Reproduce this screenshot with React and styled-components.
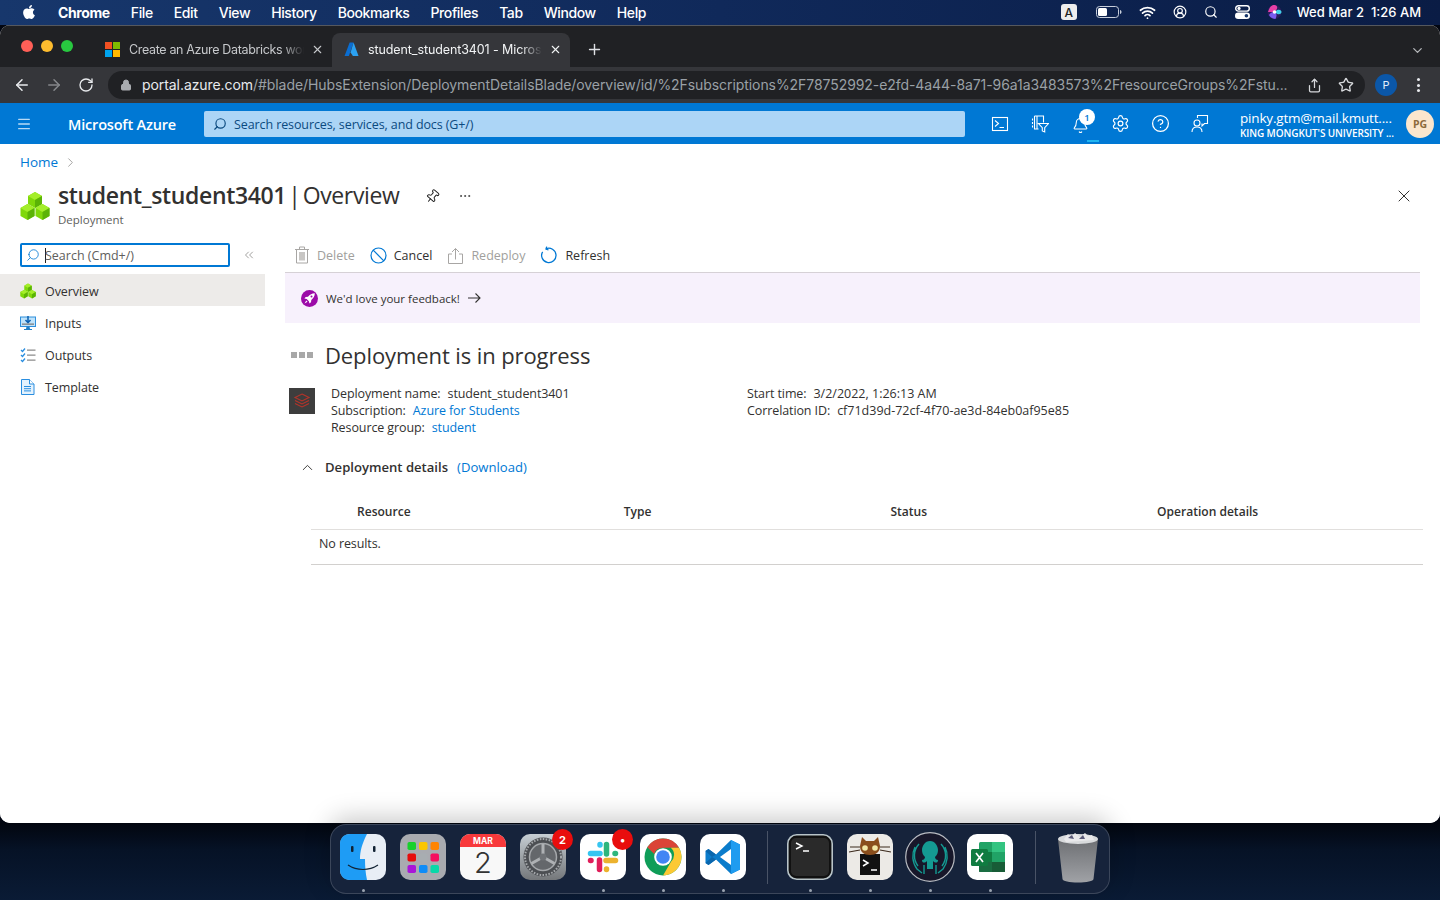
import React from 'react';
import styled, { createGlobalStyle } from 'styled-components';
import { FaApple } from 'react-icons/fa';
import { ArrowLeft, ArrowRight, RotateCw, Lock, Share, Star, ChevronDown, X, Plus, Search, Pin, ChevronRight, ChevronUp, ChevronsLeft, Wifi, CircleUserRound, Ellipsis, Menu, Settings, CircleHelp, Bell } from 'lucide-react';

const Global = createGlobalStyle`
  html, body { margin: 0; padding: 0; background: #0b1830; }
  * { box-sizing: border-box; }
  #root { width: 1440px; height: 900px; overflow: hidden; }
`;
const AZ = '"Open Sans", "Noto Sans", sans-serif';
const MAC = 'Inter, "Liberation Sans", sans-serif';
const BLUE = '#0078d4';

const Desktop = styled.div`
  width: 1440px; height: 900px; display: flex; flex-direction: column; overflow: hidden;
  background: #020611;
`;
const MenuBar = styled.header`
  height: 25px; flex: none; display: flex; align-items: center; padding: 0 19px 1px 21px;
  background: linear-gradient(90deg, #17376c 0%, #10295a 50%, #0a1c45 100%);
  color: #fff; font: 500 14px ${MAC};
`;
const MenuLeft = styled.div`display: flex; align-items: center; gap: 21px;`;
const MenuItem = styled.span`font-weight: ${p => (p.$bold ? 700 : 500)}; letter-spacing: -0.39px;`;
const MenuRight = styled.div`margin-left: auto; display: flex; align-items: center; gap: 17px;`;
const InputBadge = styled.span`
  width: 16px; height: 16px; margin-right: 2px; background: #eee; color: #222; border-radius: 3px; font: 500 12px ${MAC};
  display: flex; align-items: center; justify-content: center;
`;
const Clock = styled.span`margin-left: -2px; font-size: 13px; white-space: pre;`;

const Window = styled.div`
  height: 798px; flex: none; background: #fff; border-radius: 10px; overflow: hidden;
  display: flex; flex-direction: column; box-shadow: inset 0 0 0 1px rgba(255,255,255,.08);
  position: relative; z-index: 1;
`;
const TabStrip = styled.div`
  height: 42px; flex: none; background: #202124; display: flex; align-items: flex-end; padding-left: 21px; position: relative;
  border-top: 1px solid #55585e;
`;
const Lights = styled.div`display: flex; gap: 8px; align-self: flex-start; margin-top: 14px; margin-right: 20px;`;
const Light = styled.i`width: 12px; height: 12px; border-radius: 50%; background: ${p => p.$c};`;
const Tab = styled.div`
  width: ${p => p.$w}px; height: 34px; display: flex; align-items: center; flex: none;
  background: ${p => (p.$active ? '#35363a' : 'transparent')}; border-radius: 8px 8px 0 0;
  color: ${p => (p.$active ? '#f1f3f4' : '#c6c8cb')}; font: 400 12.5px ${MAC}; padding: 0 8px 2px 12px;
  letter-spacing: ${p => (p.$active ? '-0.1px' : '-0.35px')};
  svg { flex: none; }
`;
const TabTitle = styled.span`
  flex: 1; margin: 0 7px 0 9px; white-space: nowrap; overflow: hidden;
  -webkit-mask-image: linear-gradient(90deg, #000 88%, transparent);
  mask-image: linear-gradient(90deg, #000 88%, transparent);
`;
const NewTab = styled.div`margin: 0 0 9px 16px; color: #dfe1e5; display: flex;`;
const TabsMenu = styled.div`position: absolute; right: 15px; top: 17px; color: #b6b8bb; display: flex;`;

const Toolbar = styled.div`
  height: 36px; flex: none; background: #35363a; display: flex; align-items: center; padding: 0 12px 0 6px; color: #e6e7e9;
`;
const NavBtn = styled.div`width: 32px; flex: none; display: flex; justify-content: center; color: ${p => (p.$dim ? '#85878b' : '#e8eaed')};`;
const Omnibox = styled.div`
  flex: none; width: 1257px; height: 28px; margin-left: 6px; border-radius: 14px; background: #202124;
  display: flex; align-items: center; padding: 0 11px 0 12px; font: 400 14px ${MAC}; color: #9aa0a6;
`;
const Url = styled.span`flex: 1; margin: -1px 0 0 10px; white-space: nowrap; letter-spacing: -0.072px; b { font-weight: 400; color: #e8eaed; }`;
const OmniIcon = styled.span`margin-left: ${p => p.$ml || 0}px; display: flex; color: #d6d8db;`;
const Profile = styled.div`
  width: 22px; height: 22px; flex: none; border-radius: 50%; background: #0b57a8; color: #e3eefb; margin-left: 10px;
  display: flex; align-items: center; justify-content: center; font: 400 11px ${MAC};
`;
const Kebab = styled.div`margin-left: 20px; display: flex; flex-direction: column; gap: 2.5px; i { width: 3px; height: 3px; background: #e8eaed; border-radius: 50%; }`;

const AzureBar = styled.div`
  height: 41px; flex: none; background: ${BLUE}; color: #fff; display: flex; align-items: center; padding-left: 16px; font-family: ${AZ};
`;
const Brand = styled.span`margin-left: 36px; padding-top: 1px; width: 136px; font-size: 14.5px; font-weight: 600; letter-spacing: -0.18px; white-space: nowrap;`;
const GlobalSearch = styled.div`
  width: 761px; height: 26px; background: #acd5f6; border-radius: 2px; display: flex; align-items: center; gap: 7px; padding: 1px 9px 0;
  color: #0b4a7f; font-size: 12.5px; letter-spacing: -0.1px; svg { transform: scaleX(-1); }
`;
const HeaderIcons = styled.div`display: flex; margin-left: 15px;`;
const HeaderIcon = styled.div`
  width: 40px; height: 41px; display: flex; align-items: center; justify-content: center; position: relative;
`;
const BellWrap = styled.span`display: flex; margin: 3px 0 0 0;`;
const Count = styled.span`
  position: absolute; top: 6px; right: 5px; width: 16px; height: 16px; border-radius: 50%; background: #fff; color: ${BLUE};
  font-size: 9.5px; font-weight: 600; display: flex; align-items: center; justify-content: center;
`;
const ActiveMark = styled.span`position: absolute; left: 27px; bottom: 2px; width: 12px; height: 2px; background: #20b5f0;`;
const Account = styled.div`
  margin-left: 20px; width: 154px; display: flex; flex-direction: column; white-space: nowrap; padding-top: 2px;
`;
const AccountMail = styled.span`font-size: 13.5px; letter-spacing: -0.18px; line-height: 17px;`;
const AccountOrg = styled.span`font-size: 10px; font-weight: 600; letter-spacing: -0.1px; line-height: 13px;`;
const Avatar = styled.div`
  margin-left: 12px; width: 28px; height: 28px; border-radius: 50%; background: #fbe6cd; color: #8d6a3c;
  display: flex; align-items: center; justify-content: center; font-size: 10.5px; font-weight: 700;
`;

const Portal = styled.main`flex: 1; display: flex; flex-direction: column; font-family: ${AZ}; color: #323130; min-height: 0; background: #fff;`;
const Breadcrumb = styled.nav`
  height: 36px; flex: none; padding: 0 0 0 20px; display: flex; align-items: center; gap: 5px; color: ${BLUE}; font-size: 13.5px;
  svg { color: #8a8886; margin-top: 1px; }
`;
const TitleRow = styled.div`height: 58px; flex: none; display: flex; padding: 0 26px 0 20px;`;
const ResourceIcon = styled.div`width: 38px; flex: none; padding-top: 11px;`;
const TitleBlock = styled.div`display: flex; flex-direction: column; width: 349px; flex: none;`;
const Title = styled.h1`
  margin: 0; font-size: 23px; font-weight: 400; line-height: 30px; white-space: nowrap; letter-spacing: -0.35px; word-spacing: -3.5px;
  b { font-weight: 600; }
`;
const Sub = styled.span`font-size: 11.5px; color: #605e5c; line-height: 18px; margin-top: 1px;`;
const TitleActions = styled.div`display: flex; align-items: center; gap: 18px; height: 30px; padding-top: 2px; margin-left: 18px; color: #222;`;
const Close = styled.div`margin-left: auto; height: 30px; padding-top: 1px; display: flex; align-items: center; color: #323130;`;

const Body = styled.div`flex: 1; display: flex; min-height: 0;`;
const Side = styled.aside`width: 265px; flex: none;`;
const SideSearchRow = styled.div`display: flex; align-items: center; height: 24px; margin: 5px 0 7px 20px;`;
const SideSearch = styled.div`
  width: 210px; height: 24px; border: 2px solid ${BLUE}; border-radius: 2px; display: flex; align-items: center; padding: 0 0 0 4px; gap: 5px;
  font-size: 12.5px; color: #605e5c; svg { color: ${BLUE}; flex: none; transform: scaleX(-1); }
`;
const Caret = styled.span`display: inline-block; width: 1px; height: 15px; background: #222; margin-right: -1px; vertical-align: -3px;`;
const Collapse = styled.div`margin-left: 12px; color: #7a7876; display: flex;`;
const SideItem = styled.div`
  height: 32px; display: flex; align-items: center; padding: 2px 0 0 20px; gap: 9px; font-size: 12.5px; letter-spacing: -0.08px; color: #323130;
  background: ${p => (p.$active ? '#edebe9' : 'transparent')};
`;
const Content = styled.section`flex: 1; min-width: 0; padding: 0 20px 0 20px;`;
const Commands = styled.div`height: 35px; display: flex; align-items: center; border-bottom: 1px solid #d6d1d6; padding: 0 0 0 9px; gap: 15px;`;
const Command = styled.div`
  display: flex; align-items: center; gap: 7px; font-size: 12.5px; color: ${p => (p.$off ? '#a19f9d' : '#323130')};
  svg { flex: none; }
`;
const Feedback = styled.div`
  height: 50px; background: #f7f1fc; display: flex; align-items: center; padding-left: 16px; font-size: 11.5px; gap: 7px; color: #323130;
`;
const Rocket = styled.span`width: 17px; height: 17px; border-radius: 50%; background: #9c0ba8; display: flex; align-items: center; justify-content: center; margin-right: 1px;`;
const Status = styled.div`height: 32px; margin-top: 16px; display: flex; align-items: center; padding-left: 6px;`;
const Dots = styled.div`display: flex; gap: 2px; margin-right: 12px; i { width: 6px; height: 6px; background: #a8a8a8; }`;
const StatusTitle = styled.h2`margin: 0; font-size: 22px; font-weight: 400; letter-spacing: -0.1px; white-space: nowrap; color: #323130;`;
const Summary = styled.div`display: flex; margin: 14px 0 0 4px; font-size: 12.5px; line-height: 17px; color: #323130;`;
const Thumb = styled.div`width: 26px; height: 26px; background: #3d3d3d; display: flex; align-items: center; justify-content: center; margin-top: 3px; flex: none;`;
const FactCol = styled.div`width: ${p => p.$w}px; flex: none; margin-left: ${p => p.$ml || 0}px;`;
const Fact = styled.div`white-space: nowrap; color: #323130; letter-spacing: -0.1px;`;
const FactLabel = styled.span`margin-right: 7px;`;
const HexValue = styled.span`letter-spacing: 0;`;
const Lnk = styled.a`color: ${BLUE};`;
const DetailsHead = styled.div`display: flex; align-items: center; margin: 21px 0 0 14px; height: 20px; font-size: 13.1px; gap: 9px; svg { color: #323130; }`;
const DetailsTitle = styled.span`font-weight: 600;`;
const Download = styled.a`color: ${BLUE};`;
const Table = styled.div`margin: 17px -3px 0 26px;`;
const THead = styled.div`
  display: grid; grid-template-columns: repeat(4, 266.7px); height: 36px; align-items: center; padding-left: 46px;
  border-bottom: 1px solid #e1dfdd; font-size: 12.05px; font-weight: 600; color: #323130;
`;
const NoRows = styled.div`height: 35px; display: flex; align-items: center; padding: 0 0 8px 8px; font-size: 12.5px; letter-spacing: -0.1px; border-bottom: 1px solid #d2d0ce;`;

const DockWrap = styled.div`
  flex: 1; display: flex; justify-content: center; padding-top: 1px; position: relative; z-index: 2;
  background: linear-gradient(180deg, #02060f 0%, #061226 35%, #0a1b35 100%);
`;
const Dock = styled.div`
  width: 780px; height: 70px; border-radius: 16px; background: #16233b; border: 1px solid rgba(255,255,255,.16);
  box-shadow: 0 -6px 26px rgba(0,0,0,.22); display: flex; align-items: center; padding: 0 0 4px 9px;
`;
const DockItem = styled.div`
  width: ${p => p.$w ?? 46}px; height: 46px; flex: none; margin-right: ${p => p.$mr ?? 14}px; border-radius: 10px; position: relative;
  background: ${p => p.$bg || 'transparent'}; display: flex; align-items: center; justify-content: center; overflow: visible;
  svg { display: block; flex: none; }
  &::after {
    content: ''; display: ${p => (p.$on ? 'block' : 'none')}; position: absolute; left: calc(50% - 1.5px); bottom: -12px; width: 3px; height: 3px; border-radius: 50%; background: #9aa3b0;
  }
`;
const Separator = styled.i`width: 1px; height: 53px; background: rgba(255,255,255,.22); flex: none; margin: 0 19.5px 0 6.5px;`;
const Badge = styled.span`
  position: absolute; top: -5px; right: -7px; width: 21px; height: 21px; border-radius: 50%; background: #e90d0d; color: #fff;
  font: 700 11px ${MAC}; display: flex; align-items: center; justify-content: center;
`;
const CalMonth = styled.div`position: absolute; top: 0; left: 0; right: 0; height: 13px; background: #f8393b; color: #fff; border-radius: 10px 10px 0 0; font: 700 8.5px ${MAC}; text-align: center; line-height: 14px;`;
const CalDay = styled.div`color: #333; font: 300 29px ${MAC}; margin-top: 11px; line-height: 32px;`;

const Cubes = ({ s = 30 }) => (
  <svg width={s} height={s} viewBox="0 0 30 30">
    {[[15, 1], [7.5, 13], [22.5, 13]].map(([x, y], i) => (
      <g key={i}>
        <path d={`M${x} ${y}l7 4v8l-7 4-7-4v-8z`} fill="#7fd80a" />
        <path d={`M${x} ${y}l7 4-7 4-7-4z`} fill="#a4ee2a" />
        <path d={`M${x} ${y + 8}l7-4v8l-7 4z`} fill="#5bb306" />
      </g>
    ))}
  </svg>
);
const AzureLogo = () => (
  <svg width="15" height="15" viewBox="0 0 16 15"><path d="M6 0h4.2L5.2 14.5H.6z" fill="#0a6dd1" /><path d="M10.2 0l5.3 14.5h-6L7 10.6z" fill="#2ba1f1" /></svg>
);
const MsLogo = () => (
  <svg width="15" height="15" viewBox="0 0 15 15"><rect width="7" height="7" fill="#f25022" /><rect x="8" width="7" height="7" fill="#7fba00" /><rect y="8" width="7" height="7" fill="#00a4ef" /><rect x="8" y="8" width="7" height="7" fill="#ffb900" /></svg>
);
const Battery = () => (
  <svg width="26" height="12" viewBox="0 0 26 12"><rect x=".5" y=".5" width="22" height="11" rx="3" fill="none" stroke="#c7cedb" /><rect x="2" y="2" width="9" height="8" rx="1.5" fill="#fff" /><path d="M24 4v4c1-.3 1.5-1 1.5-2S25 4.3 24 4z" fill="#c7cedb" /></svg>
);
const ControlCenter = () => (
  <svg width="15" height="14" viewBox="0 0 15 14"><rect x=".7" y=".7" width="13.6" height="5.4" rx="2.7" fill="none" stroke="#fff" strokeWidth="1.4" /><circle cx="4" cy="3.4" r="1.6" fill="#fff" /><rect y="7.5" width="15" height="6.5" rx="3.2" fill="#fff" /><circle cx="11.4" cy="10.7" r="1.8" fill="#17376c" /></svg>
);
const Siri = () => (
  <svg width="15" height="16" viewBox="0 0 15 16"><circle cx="7.5" cy="8" r="7" fill="#2b1d5c" /><path d="M1 8c2-6 4-7 6.5-7S12 4 7.5 8z" fill="#e83fa6" /><path d="M7.5 8c4-4 7-2 7 0s-3 4-7 0z" fill="#3fd0e8" /><path d="M2 11c2-3 4-3 5.5-3s3 3 1 7c-3 0-5.5-2-6.5-4z" fill="#7a5cf0" /><circle cx="7.5" cy="8" r="1.8" fill="#fff" /></svg>
);
const Terminal = () => (
  <svg width="18" height="16" viewBox="0 0 18 16" fill="none" stroke="#fff" strokeWidth="1.1"><rect x="1.5" y="1.5" width="15" height="13" /><path d="M4 4.500l3.500 3-3.500 3M8.500 11.500h4.500" /></svg>
);
const DirFilter = () => (
  <svg width="18" height="18" viewBox="0 0 18 18" fill="none" stroke="#fff" strokeWidth="1.1"><path d="M3.500 1h9v6.500M3.500 1v13h4M6 1v13M1.500 3.500v2M1.500 7v2M1.500 10.500v2M7.500 8.500h10l-3.800 4.200V17l-2.400-1v-3.300z" /></svg>
);
const Feedbk = () => (
  <svg width="18" height="19" viewBox="0 0 18 19" fill="none" stroke="#fff" strokeWidth="1.1"><path d="M6.500 4V1.500h10v8h-3l-2.500 2.500v-2.500" /><circle cx="6" cy="9" r="3" /><path d="M1 18c0-3.500 2-5 5-5s5 1.500 5 5" /></svg>
);
const NavInputs = () => (
  <svg width="16" height="16" viewBox="0 0 16 16"><rect x=".5" y="2" width="15" height="9.5" fill="#bfe3fb" stroke="#2f8fdc" /><path d="M8 1v6M5.500 5L8 7.700 10.500 5" fill="none" stroke="#0a5fb0" strokeWidth="1.5" /><rect x="2" y="8.500" width="12" height="1.300" fill="#7f7f7f" /><path d="M6.500 11.500h3l.5 2.500h2v1H4v-1h2z" fill="#1f7fc7" /></svg>
);
const NavOutputs = () => (
  <svg width="16" height="16" viewBox="0 0 16 16" fill="none"><path d="M1 3l1.500 1.500L5 1.500M1 8l1.500 1.500L5 6.500M1 13l1.500 1.500L5 11.500" stroke="#2a8ee0" strokeWidth="1.3" /><path d="M7 3.200h8.500M7 8.200h8.500M7 13.200h8.500" stroke="#8b8b8b" strokeWidth="1.3" /></svg>
);
const NavTemplate = () => (
  <svg width="16" height="16" viewBox="0 0 16 16"><path d="M1.500.5h8L14 5v10.500H1.500z" fill="#e4f2fd" stroke="#2a8ee0" /><path d="M9.500.5V5H14" fill="#fff" stroke="#2a8ee0" /><path d="M4 7.500h7M4 9.700h7M4 11.900h7" stroke="#2a8ee0" /></svg>
);
const TrashOutline = () => (
  <svg width="16" height="18" viewBox="0 0 16 18" fill="none" stroke="#a8a6a4"><path d="M1 3.500h14M5.500 3.500V1h5v2.500M2.500 3.500v13.500h11V3.500" /><rect x="5" y="6" width="6" height="8.500" fill="#c8c6c4" stroke="none" /></svg>
);
const CancelIcon = () => (
  <svg width="17" height="17" viewBox="0 0 17 17" fill="none" stroke={BLUE} strokeWidth="1.2"><circle cx="8.500" cy="8.500" r="7.500" /><path d="M3.200 3.200l10.600 10.600" /></svg>
);
const RedeployIcon = () => (
  <svg width="17" height="17" viewBox="0 0 17 17" fill="none" stroke="#a8a6a4"><path d="M5 7H1.500v9.500h14V7H12M8.500 12.500V1.500M5 5l3.500-3.500L12 5" /></svg>
);
const RefreshIcon = () => (
  <svg width="18" height="18" viewBox="0 0 18 18" fill="none" stroke={BLUE} strokeWidth="1.3"><path d="M6 2.800a7.200 7.200 0 1 1-3.400 3" /><path d="M6.700.6L6 3 8.500 4" /></svg>
);
const RocketIcon = () => (
  <svg width="11" height="11" viewBox="0 0 11 11" fill="#fff"><path d="M10.800.2C8 .2 5.800 1.500 4 3.700L1.700 4 .4 5.600l2.300.5 2.200 2.200.5 2.300L7 9.300l.3-2.300C9.500 5.200 10.800 3 10.800.2z" /><path d="M2.300 7.500L.5 10.500l3-1.800z" /><circle cx="7.500" cy="3.500" r="1" fill="#9c0ba8" /></svg>
);
const ArrowThin = () => (
  <svg width="14" height="12" viewBox="0 0 14 12" fill="none" stroke="#323130" strokeWidth="1.1"><path d="M1 6h12M8.500 1.500L13 6l-4.500 4.500" /></svg>
);
const Databricks = () => (
  <svg width="18" height="18" viewBox="0 0 18 18" fill="none" stroke="#b5342a" strokeWidth="1.1"><path d="M9 2l7 3.500-7 3.500-7-3.500zM2 8.500L9 12l7-3.500M2 11.500L9 15l7-3.500" /></svg>
);
const Finder = () => (
  <svg width="46" height="46" viewBox="0 0 46 46"><rect width="46" height="46" rx="10" fill="#e8eef5" /><path d="M10 0h17c-5 10-7 17-7 25h5c0 7 .5 14 2 21H10C4 46 0 42 0 36V10C0 4 4 0 10 0z" fill="#1e9cf5" /><rect x="11" y="12" width="2.500" height="6" rx="1" fill="#123" /><rect x="33" y="12" width="2.500" height="6" rx="1" fill="#123" /><path d="M8 31c9 6 21 6 30 0" fill="none" stroke="#123" strokeWidth="1.2" /></svg>
);
const Launchpad = () => {
  const c = ['#18d02c', '#fbc600', '#ff8400', '#e60d0d', '#a8adb1', '#f5105f', '#a915d8', '#0f8cf7', '#08d8a8'];
  return (
    <svg width="46" height="46" viewBox="0 0 46 46"><rect width="46" height="46" rx="10" fill="#a9abb0" />
      {c.map((f, i) => <rect key={f} x={7.5 + (i % 3) * 11.5} y={8 + Math.floor(i / 3) * 11.5} width="8.500" height="8" rx="1.800" fill={f} />)}
    </svg>
  );
};
const SysPrefs = () => (
  <svg width="46" height="46" viewBox="0 0 46 46"><defs><linearGradient id="sp" x1="0" y1="0" x2="0" y2="1"><stop offset="0" stopColor="#c6ced4" /><stop offset="1" stopColor="#74777a" /></linearGradient></defs><rect width="46" height="46" rx="10" fill="url(#sp)" /><circle cx="23" cy="23" r="19.5" fill="#4c4f53" /><circle cx="23" cy="23" r="18" fill="none" stroke="#a5a8ab" strokeWidth="2" strokeDasharray="1.600 1.400" /><circle cx="23" cy="23" r="13.500" fill="#64676b" stroke="#a5a8ab" strokeWidth="1.5" /><path d="M23 23V10M23 23L11.500 29.500M23 23l11.500 6.500" stroke="#aeb1b4" strokeWidth="3" /><circle cx="23" cy="23" r="3.500" fill="#6f7276" /></svg>
);
const Slack = () => (
  <svg width="32" height="32" viewBox="0 0 32 32" strokeWidth="5.5" strokeLinecap="round" fill="none">
    <path d="M3.500 12.500H13M13 3.500V4" stroke="#36c5f0" /><path d="M19.500 3.500V13M28.500 12.500H28" stroke="#2eb67d" /><path d="M28.500 19.500H19M19.500 28.500V28" stroke="#ecb22e" /><path d="M12.500 28.500V19M3.500 19.500H4" stroke="#e01e5a" />
  </svg>
);
const ChromeLogo = () => (
  <svg width="38" height="38" viewBox="0 0 38 38"><circle cx="19" cy="19" r="18.5" fill="#0f9d58" /><path d="M19 .5a18.500 18.500 0 0 1 16 9.300H19a9.200 9.200 0 0 0-8.800 6.300L3.300 9.200A18.500 18.500 0 0 1 19 .5z" fill="#db4437" /><path d="M35 9.800A18.500 18.500 0 0 1 19 37.500l8-13.800a9.200 9.200 0 0 0-.2-13.900z" fill="#fcc934" /><circle cx="19" cy="19" r="8.800" fill="#fff" /><circle cx="19" cy="19" r="6.800" fill="#4285f4" /></svg>
);
const VsCode = () => (
  <svg width="36" height="36" viewBox="0 0 36 36"><path d="M26 1l9 4.500v25L26 35 11 20.500 3.500 26 .5 24v-12l3-2 7.500 5.500z" fill="#0b7ccb" /><path d="M26 1l9 4.500v25L26 35z" fill="#1f9cf0" /><path d="M26 10L15 18l11 8z" fill="#fff" /><path d="M.5 12L3.500 10 11 15.500 7 18zM7 18l4 2.500L3.500 26 .5 24z" fill="#0a66ad" /></svg>
);
const TerminalApp = () => (
  <svg width="46" height="46" viewBox="0 0 46 46"><rect x=".8" y=".8" width="44.400" height="44.400" rx="9" fill="#111" stroke="#b8c4c8" strokeWidth="1.6" /><rect x="4" y="4" width="38" height="38" rx="5" fill="#2a2a2a" /><path d="M9 9l6 3-6 3M16 17h6" stroke="#fff" strokeWidth="1.4" fill="none" /></svg>
);
const Fork = () => (
  <svg width="46" height="46" viewBox="0 0 46 46"><rect width="46" height="46" rx="10" fill="#eceae6" /><rect x="13" y="20" width="20" height="21" fill="#111" /><path d="M15 3l4 4h8l4-4 2 9c0 6-4 9-10 9s-10-3-10-9z" fill="#8a4e1c" /><circle cx="18" cy="14" r="2.800" fill="#f2e7a6" /><circle cx="28" cy="14" r="2.800" fill="#f2e7a6" /><path d="M3 13h10M2 18l11-2M43 13H33M44 18l-11-2" stroke="#3b2a1c" strokeWidth="1.2" /><path d="M16 26l5 3-5 3M24 36h6" stroke="#fff" strokeWidth="1.5" fill="none" /></svg>
);
const GitKraken = () => (
  <svg width="50" height="50" viewBox="0 0 50 50"><circle cx="25" cy="25" r="24.300" fill="#17172a" stroke="#b9bcc2" strokeWidth="1.2" /><path d="M25 9c5 0 8 5 8 9 0 3-1 5-3 7 0 1 1 3 3 3 0 3-2 3-4 2l-1-1v8h-6v-8l-1 1c-2 1-4 1-4-2 2 0 3-2 3-3-2-2-3-4-3-7 0-4 3-9 8-9z" fill="#149a92" /><path d="M14 12a17 17 0 0 0-1 22M36 12a17 17 0 0 1 1 22M10 15a21 21 0 0 0 2 22l5 4M40 15a21 21 0 0 1-2 22l-5 4M19 33v9M31 33v9" fill="none" stroke="#149a92" strokeWidth="1.4" /></svg>
);
const Excel = () => (
  <svg width="46" height="46" viewBox="0 0 46 46"><rect width="46" height="46" rx="10" fill="#fff" /><rect x="12" y="8" width="26" height="30" rx="1.5" fill="#21a366" /><rect x="25" y="8" width="13" height="10" fill="#33c481" /><rect x="12" y="18" width="13" height="10" fill="#107c41" /><rect x="25" y="28" width="13" height="10" fill="#185c37" /><rect x="12" y="28" width="13" height="10" fill="#185c37" opacity=".75" /><rect x="4" y="15" width="17" height="17" rx="1.5" fill="#107c41" /><path d="M9 19l7 9M16 19l-7 9" stroke="#fff" strokeWidth="1.7" /></svg>
);
const TrashCan = () => (
  <svg width="46" height="52" viewBox="0 0 46 52"><defs><linearGradient id="tc" x1="0" y1="0" x2="0" y2="1"><stop offset="0" stopColor="#6d6f73" /><stop offset="1" stopColor="#a0a2a6" /></linearGradient></defs><path d="M3 8h40l-4.500 40c0 2-7 3.500-15.500 3.500S7.500 50 7.500 48z" fill="url(#tc)" /><ellipse cx="23" cy="8" rx="20" ry="5" fill="#d8dadc" /><path d="M9 8l4-5 3 3 4-4 5 4 5-4 3 3 4-1 2 5-28 2z" fill="#e9e9eb" /><path d="M13 7l4-3 2 4zM24 8l4-4 2 4z" fill="#5a5a78" /></svg>
);

const TOP = ['File', 'Edit', 'View', 'History', 'Bookmarks', 'Profiles', 'Tab', 'Window', 'Help'];

export default function App() {
  return (
    <Desktop>
      <Global />
      <MenuBar>
        <MenuLeft>
          <FaApple size={16} />
          <MenuItem $bold>Chrome</MenuItem>
          {TOP.map(t => <MenuItem key={t}>{t}</MenuItem>)}
        </MenuLeft>
        <MenuRight>
          <InputBadge>A</InputBadge>
          <Battery />
          <Wifi size={17} strokeWidth={2.4} />
          <CircleUserRound size={14} strokeWidth={2} />
          <Search size={14} strokeWidth={2} />
          <ControlCenter />
          <Siri />
          <Clock>Wed Mar 2  1:26 AM</Clock>
        </MenuRight>
      </MenuBar>
      <Window>
        <TabStrip>
          <Lights><Light $c="#ff5f57" /><Light $c="#febc2e" /><Light $c="#28c840" /></Lights>
          <Tab $w="239"><MsLogo /><TabTitle>Create an Azure Databricks workspace</TabTitle><X size={13} /></Tab>
          <Tab $w="238" $active><AzureLogo /><TabTitle>student_student3401 - Microsoft Azure</TabTitle><X size={13} /></Tab>
          <NewTab><Plus size={17} /></NewTab>
          <TabsMenu><ChevronDown size={15} /></TabsMenu>
        </TabStrip>
        <Toolbar>
          <NavBtn><ArrowLeft size={18} /></NavBtn>
          <NavBtn $dim><ArrowRight size={18} /></NavBtn>
          <NavBtn><RotateCw size={16} /></NavBtn>
          <Omnibox>
            <Lock size={12} fill="#a9acb0" stroke="#a9acb0" />
            <Url><b>portal.azure.com</b>/#blade/HubsExtension/DeploymentDetailsBlade/overview/id/%2Fsubscriptions%2F78752992-e2fd-4a44-8a71-96a1a3483573%2FresourceGroups%2Fstu...</Url>
            <OmniIcon $ml="14"><Share size={15} /></OmniIcon>
            <OmniIcon $ml="16"><Star size={16} /></OmniIcon>
          </Omnibox>
          <Profile>P</Profile>
          <Kebab><i /><i /><i /></Kebab>
        </Toolbar>
        <AzureBar>
          <Menu size={16} color="#b8daf5" />
          <Brand>Microsoft Azure</Brand>
          <GlobalSearch><Search size={14} />Search resources, services, and docs (G+/)</GlobalSearch>
          <HeaderIcons>
            <HeaderIcon><Terminal /></HeaderIcon>
            <HeaderIcon><DirFilter /></HeaderIcon>
            <HeaderIcon><BellWrap><Bell size={17} strokeWidth={1.5} /></BellWrap><Count>1</Count><ActiveMark /></HeaderIcon>
            <HeaderIcon><Settings size={19} strokeWidth={1.5} /></HeaderIcon>
            <HeaderIcon><CircleHelp size={19} strokeWidth={1.6} /></HeaderIcon>
            <HeaderIcon><Feedbk /></HeaderIcon>
          </HeaderIcons>
          <Account>
            <AccountMail>pinky.gtm@mail.kmutt....</AccountMail>
            <AccountOrg>KING MONGKUT'S UNIVERSITY ...</AccountOrg>
          </Account>
          <Avatar>PG</Avatar>
        </AzureBar>
        <Portal>
          <Breadcrumb>Home <ChevronRight size={15} strokeWidth={1.2} /></Breadcrumb>
          <TitleRow>
            <ResourceIcon><Cubes /></ResourceIcon>
            <TitleBlock>
              <Title><b>student_student3401</b> | Overview</Title>
              <Sub>Deployment</Sub>
            </TitleBlock>
            <TitleActions><Pin size={15} strokeWidth={1.6} style={{ transform: 'rotate(40deg)' }} /><Ellipsis size={14} strokeWidth={1.2} /></TitleActions>
            <Close><X size={20} strokeWidth={1.2} /></Close>
          </TitleRow>
          <Body>
            <Side>
              <SideSearchRow>
                <SideSearch><Search size={14} strokeWidth={1.4} /><span><Caret />Search (Cmd+/)</span></SideSearch>
                <Collapse><ChevronsLeft size={14} strokeWidth={1.2} /></Collapse>
              </SideSearchRow>
              <SideItem $active><Cubes s={16} />Overview</SideItem>
              <SideItem><NavInputs />Inputs</SideItem>
              <SideItem><NavOutputs />Outputs</SideItem>
              <SideItem><NavTemplate />Template</SideItem>
            </Side>
            <Content>
              <Commands>
                <Command $off><TrashOutline /> Delete</Command>
                <Command><CancelIcon /> Cancel</Command>
                <Command $off><RedeployIcon /> Redeploy</Command>
                <Command><RefreshIcon /> Refresh</Command>
              </Commands>
              <Feedback><Rocket><RocketIcon /></Rocket>We'd love your feedback! <ArrowThin /></Feedback>
              <Status><Dots><i /><i /><i /></Dots><StatusTitle>Deployment is in progress</StatusTitle></Status>
              <Summary>
                <Thumb><Databricks /></Thumb>
                <FactCol $w="416" $ml="16">
                  <Fact><FactLabel>Deployment name:</FactLabel>student_student3401</Fact>
                  <Fact><FactLabel>Subscription:</FactLabel><Lnk>Azure for Students</Lnk></Fact>
                  <Fact><FactLabel>Resource group:</FactLabel><Lnk>student</Lnk></Fact>
                </FactCol>
                <FactCol $w="400">
                  <Fact><FactLabel>Start time:</FactLabel><HexValue>3/2/2022, 1:26:13 AM</HexValue></Fact>
                  <Fact><FactLabel>Correlation ID:</FactLabel><HexValue>cf71d39d-72cf-4f70-ae3d-84eb0af95e85</HexValue></Fact>
                </FactCol>
              </Summary>
              <DetailsHead><ChevronUp size={17} strokeWidth={1.3} /><DetailsTitle>Deployment details</DetailsTitle><Download>(Download)</Download></DetailsHead>
              <Table>
                <THead><span>Resource</span><span>Type</span><span>Status</span><span>Operation details</span></THead>
                <NoRows>No results.</NoRows>
              </Table>
            </Content>
          </Body>
        </Portal>
      </Window>
      <DockWrap>
        <Dock>
          <DockItem $on><Finder /></DockItem>
          <DockItem><Launchpad /></DockItem>
          <DockItem $bg="#f8f8f8"><CalMonth>MAR</CalMonth><CalDay>2</CalDay></DockItem>
          <DockItem><SysPrefs /><Badge>2</Badge></DockItem>
          <DockItem $on $bg="#fff"><Slack /><Badge>•</Badge></DockItem>
          <DockItem $on $bg="#fff"><ChromeLogo /></DockItem>
          <DockItem $on $bg="#fff"><VsCode /></DockItem>
          <Separator />
          <DockItem $on><TerminalApp /></DockItem>
          <DockItem $on $mr="12"><Fork /></DockItem>
          <DockItem $on $w="50" $mr="12"><GitKraken /></DockItem>
          <DockItem $on $mr="15"><Excel /></DockItem>
          <Separator />
          <DockItem><TrashCan /></DockItem>
        </Dock>
      </DockWrap>
    </Desktop>
  );
}
